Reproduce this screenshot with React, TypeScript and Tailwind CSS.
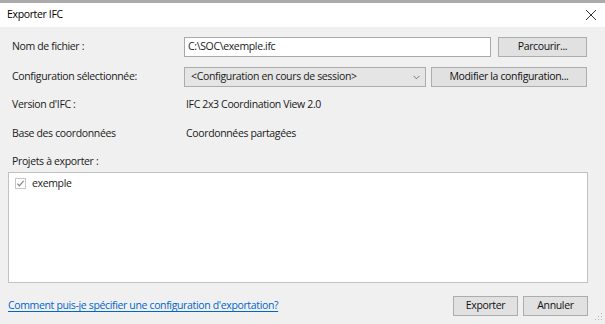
import React from "react";

const font = { fontFamily: '"Open Sans", "Noto Sans", sans-serif' };

function Button({ label, className }: { label: string; className?: string }) {
    return (
        <div
            className={`flex items-center justify-center h-[20px] border border-[#adadad] bg-[#e1e1e1] text-[#111] ${className ?? ""}`}
        >
            {label}
        </div>
    );
}

export default function App() {
    return (
        <div
            className="w-[605px] h-[324px] flex flex-col bg-[#f0f0f0] overflow-hidden text-[10.5px] tracking-[-0.35px] text-[#1a1a1a]"
            style={font}
        >
            {/* title bar */}
            <div className="h-[27px] shrink-0 bg-white border-t-[3px] border-[#ababab] flex items-center justify-between pl-[7px] pr-[7px]">
                <span className="text-black">Exporter IFC</span>
                <svg width="12" height="12" viewBox="0 0 12 12" className="mr-[1px]">
                    <path d="M1 1L11 11M11 1L1 11" stroke="#333" strokeWidth="1" />
                </svg>
            </div>

            <div className="flex flex-col flex-1 px-[8px] pt-[10px] relative">
                {/* Nom de fichier */}
                <div className="flex items-center h-[20px]">
                    <span className="w-[176px] pl-[4px]">Nom de fichier :</span>
                    <div className="w-[307px] h-[20px] border border-[#a9a9a9] bg-white flex items-center px-[3px]">
                        C:\SOC\exemple.ifc
                    </div>
                    <Button label="Parcourir..." className="ml-[7px] w-[89px]" />
                </div>

                {/* Configuration */}
                <div className="flex items-center h-[20px] mt-[10px]">
                    <span className="w-[176px] pl-[4px]">Configuration sélectionnée:</span>
                    <div className="w-[242px] h-[20px] border border-[#adadad] bg-[#e5e5e5] flex items-center justify-between pl-[6px] pr-[5px]">
                        <span>&lt;Configuration en cours de session&gt;</span>
                        <svg width="7" height="5" viewBox="0 0 7 5">
                            <path d="M0.5 0.8L3.5 3.8L6.5 0.8" fill="none" stroke="#777" strokeWidth="1" />
                        </svg>
                    </div>
                    <Button label="Modifier la configuration..." className="ml-[5px] w-[156px]" />
                </div>

                {/* Version */}
                <div className="flex items-center h-[20px] mt-[8px]">
                    <span className="w-[178px] pl-[4px]">Version d'IFC :</span>
                    <span>IFC 2x3 Coordination View 2.0</span>
                </div>

                {/* Base */}
                <div className="flex items-center h-[20px] mt-[9px]">
                    <span className="w-[178px] pl-[4px]">Base des coordonnées</span>
                    <span>Coordonnées partagées</span>
                </div>

                <div className="flex items-center h-[16px] mt-[10px] pl-[4px]">Projets à exporter :</div>

                {/* list */}
                <div className="mt-[2px] w-[580px] h-[111px] border border-[#c2c2c2] bg-white pt-[3px] pl-[6px]">
                    <div className="flex items-center gap-[6px]">
                        <svg width="11" height="11" viewBox="0 0 11 11">
                            <rect x="0.5" y="0.5" width="10" height="10" fill="#fff" stroke="#c5c5c5" />
                            <path d="M2.3 5.6L4.4 7.8L8.6 2.8" fill="none" stroke="#8a8a8a" strokeWidth="1.3" />
                        </svg>
                        <span>exemple</span>
                    </div>
                </div>

                {/* bottom */}
                <div className="flex items-center justify-between w-[580px] mt-[13px]">
                    <span className="text-[#0066cc] underline underline-offset-[2px]">
                        Comment puis-je spécifier une configuration d'exportation?
                    </span>
                    <div className="flex gap-[5px]">
                        <Button label="Exporter" className="w-[65px]" />
                        <Button label="Annuler" className="w-[65px]" />
                    </div>
                </div>

                {/* resize grip */}
                <svg width="8" height="8" viewBox="0 0 8 8" className="absolute right-[2px] bottom-[3px]">
                    <rect x="6" y="0" width="1" height="1" fill="#b5b5b5" />
                    <rect x="3" y="3" width="1" height="1" fill="#b5b5b5" />
                    <rect x="6" y="3" width="1" height="1" fill="#b5b5b5" />
                    <rect x="0" y="6" width="1" height="1" fill="#b5b5b5" />
                    <rect x="3" y="6" width="1" height="1" fill="#b5b5b5" />
                    <rect x="6" y="6" width="1" height="1" fill="#b5b5b5" />
                </svg>
            </div>
        </div>
    );
}
